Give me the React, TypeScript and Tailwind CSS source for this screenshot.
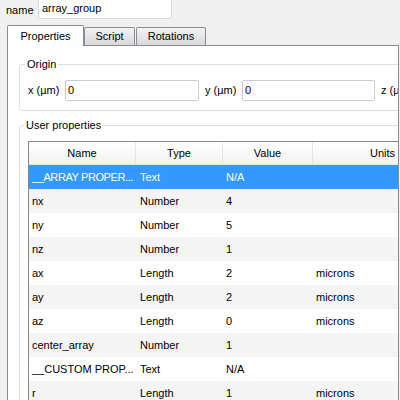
import React from 'react';

type Row = { name: string; type: string; value: string; units: string };

const rows: Row[] = [
  { name: '__ARRAY PROPER...', type: 'Text', value: 'N/A', units: '' },
  { name: 'nx', type: 'Number', value: '4', units: '' },
  { name: 'ny', type: 'Number', value: '5', units: '' },
  { name: 'nz', type: 'Number', value: '1', units: '' },
  { name: 'ax', type: 'Length', value: '2', units: 'microns' },
  { name: 'ay', type: 'Length', value: '2', units: 'microns' },
  { name: 'az', type: 'Length', value: '0', units: 'microns' },
  { name: 'center_array', type: 'Number', value: '1', units: '' },
  { name: '__CUSTOM PROP...', type: 'Text', value: 'N/A', units: '' },
  { name: 'r', type: 'Length', value: '1', units: 'microns' },
];

const TextBox = ({ value, className }: { value: string; className: string }) => (
  <div className={`h-[21px] bg-white border border-[#c9ccd2] rounded-[2px] pl-[2px] leading-[19px] ${className}`}>
    {value}
  </div>
);

const Tab = ({ label, active, className }: { label: string; active?: boolean; className: string }) => (
  <div
    className={`flex items-center justify-center border border-b-0 border-[#898c95] rounded-t-[2px] ${
      active ? 'h-[21px] -mb-px relative z-10 bg-white' : 'h-[18px] bg-gradient-to-b from-[#f2f2f2] to-[#d9d9d9]'
    } ${className}`}
  >
    {label}
  </div>
);

export default function App() {
  return (
    <div className="w-[400px] h-[400px] overflow-hidden bg-[#f0f0f0] text-[11px] text-black font-['Liberation_Sans',Arial,sans-serif]">
      {/* name field, its top is cut off by the window */}
      <div className="flex items-start h-[25px]">
        <span className="w-[38px] pl-[6px] pt-[2px] leading-[16px]">name</span>
        <TextBox value="array_group" className="-mt-[2px] w-[134px] pl-[3px] border-[#d9d9d9]" />
      </div>

      {/* tabs */}
      <div className="flex items-end h-[20px] pl-[7px]">
        <Tab label="Properties" active className="w-[77px]" />
        <Tab label="Script" className="w-[51px]" />
        <Tab label="Rotations" className="w-[70px] ml-px" />
      </div>

      {/* tab page */}
      <div className="ml-[7px] w-[392px] h-[360px] border border-[#898c95] border-b-0 bg-white overflow-hidden">
        <div className="w-[520px] pl-[11px] pt-[10px]">
          <fieldset className="border border-[#d5dfe5] rounded-[3px] pb-[9px]">
            <legend className="ml-[5px] px-[2px] leading-[16px]">Origin</legend>
            <div className="flex items-center mt-[8px] pl-[8px]">
              <span className="w-[37px]">x (µm)</span>
              <TextBox value="0" className="w-[134px]" />
              <span className="w-[37px] ml-[6px]">y (µm)</span>
              <TextBox value="0" className="w-[133px]" />
              <span className="ml-[6px]">z (µm)</span>
            </div>
          </fieldset>

          <fieldset className="mt-[6px] border border-[#d5dfe5] rounded-[3px]">
            <legend className="ml-[4px] px-[2px] leading-[16px]">User properties</legend>
            <div className="ml-[8px] mt-[8px] border border-[#828790]">
              <div className="grid grid-cols-[107px_87px_90px_140px] h-[23px] bg-gradient-to-b from-white to-[#f3f3f3] border-b border-[#e5e5e5]">
                {['Name', 'Type', 'Value', 'Units'].map((h) => (
                  <div key={h} className="flex items-center justify-center border-r border-[#e5e5e5] leading-[22px]">
                    {h}
                  </div>
                ))}
              </div>
              {rows.map((r, i) => (
                <div
                  key={i}
                  className={`grid grid-cols-[107px_87px_90px_140px] h-[24px] items-center ${
                    i === 0 ? 'bg-[#3399ff] text-white' : i % 2 === 1 ? 'bg-[#f4f4f4]' : 'bg-white'
                  }`}
                >
                  <span className={`pl-[3px] whitespace-nowrap ${i === 0 ? 'tracking-[-0.4px]' : ''}`}>{r.name}</span>
                  <span className="pl-[4px]">{r.type}</span>
                  <span className="pl-[3px]">{r.value}</span>
                  <span className="pl-[3px]">{r.units}</span>
                </div>
              ))}
            </div>
          </fieldset>
        </div>
      </div>
    </div>
  );
}
